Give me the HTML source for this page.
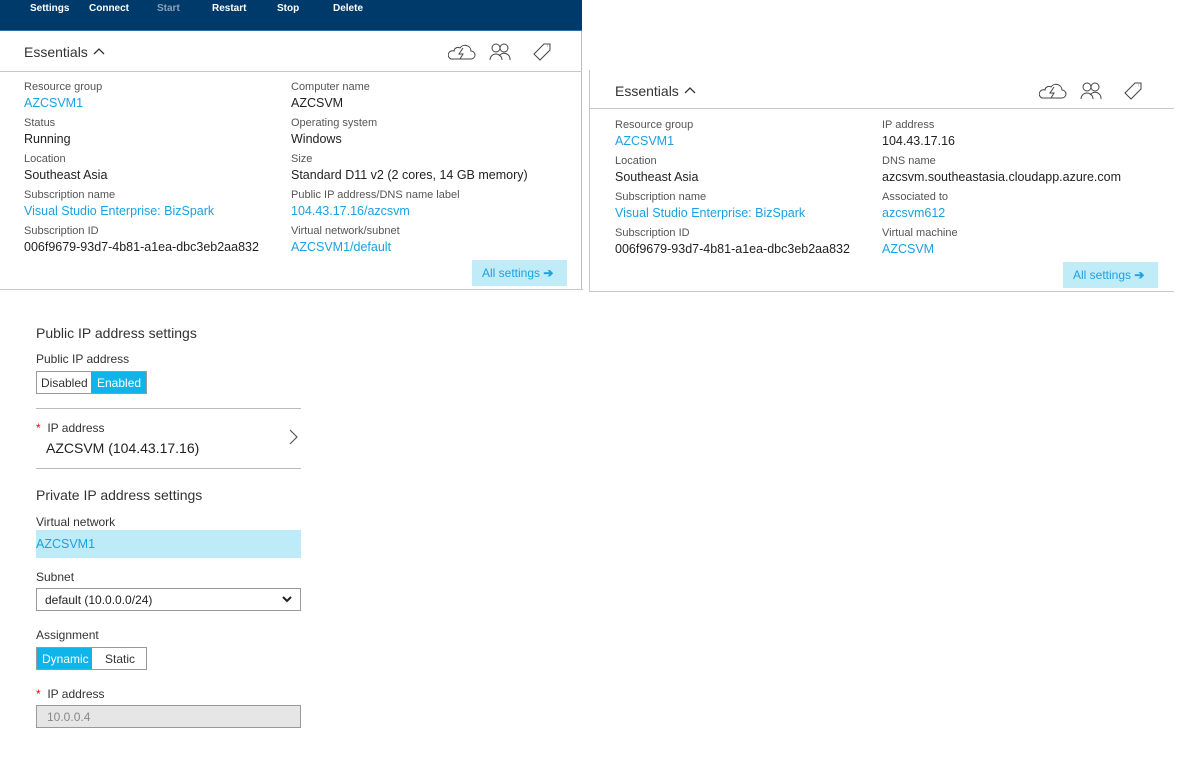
<!DOCTYPE html>
<html><head><meta charset="utf-8"><style>
*{margin:0;padding:0;box-sizing:border-box}
body{width:1178px;height:764px;background:#fff;position:relative;overflow:hidden;font-family:"Liberation Sans",sans-serif;color:#222}
.a{position:absolute;white-space:nowrap}
.lb{font-size:11px;color:#555}
.v{font-size:12.5px;color:#222}
.lk{font-size:12.5px;color:#1ba1e2}
.bar{position:absolute;left:0;top:0;width:582px;height:31px;background:#003a6b;border-bottom:1px solid #2f6fa6}
.bar span{position:absolute;top:3px;font-size:10px;font-weight:bold;color:#fff}
.btn{position:absolute;background:#c0ecf8;color:#1ba1e2;font-size:12px;padding:6px 0 0 10px}
.ess{font-size:14px;color:#333}
</style></head><body>
<div class="bar"><span style="left:30px">Settings</span><span style="left:89px">Connect</span><span style="left:157px;color:#8aa0b8">Start</span><span style="left:212px">Restart</span><span style="left:277px">Stop</span><span style="left:333px">Delete</span></div>
<!-- panel 1 -->
<div class="a" style="left:581px;top:31px;width:1px;height:259px;background:#bbb"></div>
<div class="a" style="left:0;top:289px;width:583px;height:1px;background:#c8c8c8"></div>
<div class="a" style="left:0;top:71px;width:582px;height:1px;background:#c8c8c8"></div>
<div class="a ess" style="left:24px;top:44px">Essentials</div>
<svg class="a" style="left:93px;top:47px" width="12" height="8"><path d="M1 7l5-5 5 5" stroke="#333" stroke-width="1.3" fill="none"/></svg>
<svg class="a" style="left:448px;top:40px" width="110" height="24" fill="none" stroke="#444" stroke-width="1"><path d="M3 19h20a4 4 0 0 0 0-8a6 6 0 0 0-11-3a4 4 0 0 0-6 3a4 4 0 0 0-3 8zM15 8l-4 6h4l-3 5"/><circle cx="48" cy="8" r="4"/><circle cx="56" cy="8" r="4"/><path d="M42 20a6 6 0 0 1 12 0M51 16a6 6 0 0 1 11 4"/><path d="M86 14l10-10h6v6l-10 10zM99 6h0.5"/></svg>
<div class="a lb" style="left:24px;top:81px">Resource group</div><div class="a lk" style="left:24px;top:96px">AZCSVM1</div>
<div class="a lb" style="left:24px;top:117px">Status</div><div class="a v" style="left:24px;top:132px">Running</div>
<div class="a lb" style="left:24px;top:153px">Location</div><div class="a v" style="left:24px;top:168px">Southeast Asia</div>
<div class="a lb" style="left:24px;top:189px">Subscription name</div><div class="a lk" style="left:24px;top:204px">Visual Studio Enterprise: BizSpark</div>
<div class="a lb" style="left:24px;top:225px">Subscription ID</div><div class="a v" style="left:24px;top:240px">006f9679-93d7-4b81-a1ea-dbc3eb2aa832</div>
<div class="a lb" style="left:291px;top:81px">Computer name</div><div class="a v" style="left:291px;top:96px">AZCSVM</div>
<div class="a lb" style="left:291px;top:117px">Operating system</div><div class="a v" style="left:291px;top:132px">Windows</div>
<div class="a lb" style="left:291px;top:153px">Size</div><div class="a v" style="left:291px;top:168px">Standard D11 v2 (2 cores, 14 GB memory)</div>
<div class="a lb" style="left:291px;top:189px">Public IP address/DNS name label</div><div class="a lk" style="left:291px;top:204px">104.43.17.16/azcsvm</div>
<div class="a lb" style="left:291px;top:225px">Virtual network/subnet</div><div class="a lk" style="left:291px;top:240px">AZCSVM1/default</div>
<div class="btn" style="left:472px;top:260px;width:95px;height:26px">All settings <b>&#10132;</b></div>
<!-- panel 2 -->
<div class="a" style="left:589px;top:70px;width:1px;height:222px;background:#c8c8c8"></div>
<div class="a" style="left:589px;top:291px;width:585px;height:1px;background:#c8c8c8"></div>
<div class="a" style="left:589px;top:108px;width:585px;height:1px;background:#c8c8c8"></div>
<div class="a ess" style="left:615px;top:83px">Essentials</div>
<svg class="a" style="left:684px;top:86px" width="12" height="8"><path d="M1 7l5-5 5 5" stroke="#333" stroke-width="1.3" fill="none"/></svg>
<svg class="a" style="left:1039px;top:79px" width="110" height="24" fill="none" stroke="#444" stroke-width="1"><path d="M3 19h20a4 4 0 0 0 0-8a6 6 0 0 0-11-3a4 4 0 0 0-6 3a4 4 0 0 0-3 8zM15 8l-4 6h4l-3 5"/><circle cx="48" cy="8" r="4"/><circle cx="56" cy="8" r="4"/><path d="M42 20a6 6 0 0 1 12 0M51 16a6 6 0 0 1 11 4"/><path d="M86 14l10-10h6v6l-10 10zM99 6h0.5"/></svg>
<div class="a lb" style="left:615px;top:119px">Resource group</div><div class="a lk" style="left:615px;top:134px">AZCSVM1</div>
<div class="a lb" style="left:615px;top:155px">Location</div><div class="a v" style="left:615px;top:170px">Southeast Asia</div>
<div class="a lb" style="left:615px;top:191px">Subscription name</div><div class="a lk" style="left:615px;top:206px">Visual Studio Enterprise: BizSpark</div>
<div class="a lb" style="left:615px;top:227px">Subscription ID</div><div class="a v" style="left:615px;top:242px">006f9679-93d7-4b81-a1ea-dbc3eb2aa832</div>
<div class="a lb" style="left:882px;top:119px">IP address</div><div class="a v" style="left:882px;top:134px">104.43.17.16</div>
<div class="a lb" style="left:882px;top:155px">DNS name</div><div class="a v" style="left:882px;top:170px">azcsvm.southeastasia.cloudapp.azure.com</div>
<div class="a lb" style="left:882px;top:191px">Associated to</div><div class="a lk" style="left:882px;top:206px">azcsvm612</div>
<div class="a lb" style="left:882px;top:227px">Virtual machine</div><div class="a lk" style="left:882px;top:242px">AZCSVM</div>
<div class="btn" style="left:1063px;top:262px;width:95px;height:26px">All settings <b>&#10132;</b></div>
<!-- form -->
<div class="a" style="left:36px;top:325px;font-size:14px;color:#333">Public IP address settings</div>
<div class="a" style="left:36px;top:352px;font-size:12px;color:#333">Public IP address</div>
<div class="a" style="left:36px;top:371px;width:111px;height:23px;border:1px solid #999;font-size:12px">
<span class="a" style="left:0;top:0;width:54px;height:21px;padding:4px 0 0 4px;color:#333">Disabled</span>
<span class="a" style="left:54px;top:0;width:55px;height:21px;padding:4px 0 0 6px;background:#0fb4eb;color:#fff">Enabled</span></div>
<div class="a" style="left:36px;top:408px;width:265px;height:1px;background:#bbb"></div>
<div class="a" style="left:36px;top:421px;font-size:12px;color:#333"><span style="color:#e00">*</span>&nbsp; IP address</div>
<div class="a" style="left:46px;top:440px;font-size:14px;color:#222">AZCSVM (104.43.17.16)</div>
<svg class="a" style="left:289px;top:429px" width="10" height="16"><path d="M1 1l7 7-7 7" stroke="#555" stroke-width="1.2" fill="none"/></svg>
<div class="a" style="left:36px;top:468px;width:265px;height:1px;background:#bbb"></div>
<div class="a" style="left:36px;top:487px;font-size:14px;color:#333">Private IP address settings</div>
<div class="a" style="left:36px;top:515px;font-size:12px;color:#333">Virtual network</div>
<div class="a" style="left:36px;top:530px;width:265px;height:28px;background:#bdebf8;color:#1ba1e2;font-size:12.5px;padding:7px 0 0 0">AZCSVM1</div>
<div class="a" style="left:36px;top:570px;font-size:12px;color:#333">Subnet</div>
<div class="a" style="left:36px;top:588px;width:265px;height:23px;border:1px solid #999;font-size:12px;padding:4px 0 0 8px;color:#222">default (10.0.0.0/24)
<svg class="a" style="left:245px;top:7px" width="10" height="8"><path d="M1 1l4 4 4-4" stroke="#222" stroke-width="2" fill="none"/></svg></div>
<div class="a" style="left:36px;top:628px;font-size:12px;color:#333">Assignment</div>
<div class="a" style="left:36px;top:647px;width:111px;height:23px;border:1px solid #999;font-size:12px">
<span class="a" style="left:0;top:0;width:55px;height:21px;padding:4px 0 0 5px;background:#0fb4eb;color:#fff">Dynamic</span>
<span class="a" style="left:55px;top:0;width:54px;height:21px;padding:4px 0 0 13px;color:#333">Static</span></div>
<div class="a" style="left:36px;top:687px;font-size:12px;color:#333"><span style="color:#e00">*</span>&nbsp; IP address</div>
<div class="a" style="left:36px;top:705px;width:265px;height:23px;border:1px solid #999;background:#e6e6e6;font-size:12px;padding:4px 0 0 10px;color:#888">10.0.0.4</div>
</body></html>
